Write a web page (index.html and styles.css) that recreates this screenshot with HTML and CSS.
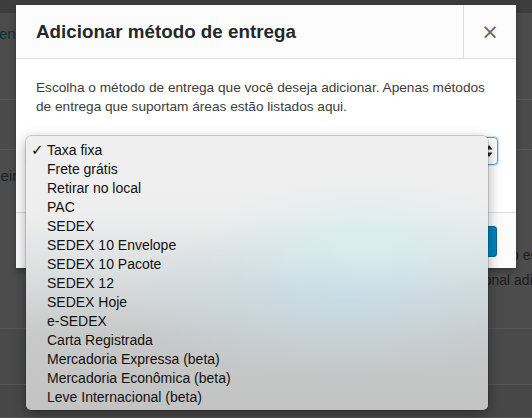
FILE: index.html
```html
<!doctype html>
<html>

<head>
    <title>Adicionar método de entrega</title>
    <link rel="stylesheet" href="styles.css">
</head>

<body>
    <div class="page">
        <div class="topbar"></div>
        <div class="row row-head">
            <span class="link-text">en</span>
        </div>
        <div class="row row-sub"></div>
        <div class="row row-zone">
            <div class="zone-name">Brasileiro</div>
            <div class="zone-desc first">o estado</div>
            <div class="zone-desc second">Internacional adicional</div>
        </div>
        <div class="row row-next"></div>
        <div class="row row-last"></div>
    </div>

    <div class="modal">
        <div class="modal-header">
            <h1>Adicionar método de entrega</h1>
            <button class="modal-close" type="button">&times;</button>
        </div>
        <div class="modal-body">
            <p>Escolha o método de entrega que você deseja adicionar. Apenas métodos de entrega que suportam áreas estão listados aqui.</p>
            <div class="select-box">
                <span class="select-value">Taxa fixa</span>
                <span class="select-arrows">
                    <svg width="8" height="14" viewBox="0 0 8 14">
                        <path d="M4 1 L7.5 5.5 H0.5 Z" fill="#222" />
                        <path d="M4 13 L7.5 8.5 H0.5 Z" fill="#222" />
                    </svg>
                </span>
            </div>
        </div>
        <div class="modal-footer">
            <button class="add-btn" type="button">Adicionar método de entrega</button>
        </div>
    </div>

    <ul class="select-menu">
        <li class="selected">Taxa fixa</li>
        <li>Frete grátis</li>
        <li>Retirar no local</li>
        <li>PAC</li>
        <li>SEDEX</li>
        <li>SEDEX 10 Envelope</li>
        <li>SEDEX 10 Pacote</li>
        <li>SEDEX 12</li>
        <li>SEDEX Hoje</li>
        <li>e-SEDEX</li>
        <li>Carta Registrada</li>
        <li>Mercadoria Expressa (beta)</li>
        <li>Mercadoria Econômica (beta)</li>
        <li>Leve Internacional (beta)</li>
    </ul>
</body>

</html>
```

FILE: styles.css
```css
body {
    margin: 0;
    width: 532px;
    height: 418px;
    overflow: hidden;
    position: relative;
    background-color: #4a4a4a;
    font-family: "Liberation Sans", Arial, sans-serif;
    font-size: 14px;
    color: #1c1c1c;
}

/* page behind the overlay */

.page {
    overflow: hidden;
}

.topbar {
    height: 13px;
    background-color: #3d3d3d;
}

.row {
    border-bottom: 1px solid #565656;
    box-sizing: border-box;
}

.row-head {
    height: 87px;
    padding-top: 12px;
    background-color: #4b4b4b;
}

.link-text {
    display: block;
    margin-left: -1px;
    color: #0d2f3c;
    font-size: 15px;
}

.row-sub {
    height: 50px;
}

.row-zone {
    height: 179px;
    padding-top: 17px;
    background-color: #4c4c4c;
}

.zone-name {
    margin-left: -37px;
    font-size: 15px;
    color: #16252b;
    white-space: nowrap;
}

.zone-desc {
    white-space: nowrap;
    line-height: 25px;
}

.zone-desc.first {
    margin-top: 59px;
    margin-left: 511px;
}

.zone-desc.second {
    margin-left: 430px;
}

.row-next {
    height: 56px;
}

.row-last {
    height: 33px;
    background-color: #474747;
}

/* modal */

.modal {
    position: absolute;
    left: 16px;
    top: 5px;
    width: 500px;
    background-color: #fff;
    box-shadow: 0 3px 6px rgba(0, 0, 0, 0.3);
}

.modal-header {
    display: flex;
    height: 53px;
    background-color: #fcfcfc;
    border-bottom: 1px solid #dddddd;
}

.modal-header h1 {
    flex: 1;
    margin: 0;
    padding-left: 20px;
    font-size: 18.8px;
    line-height: 54px;
    color: #23282d;
}

.modal-close {
    width: 53px;
    border: none;
    border-left: 1px solid #dddddd;
    background: none;
    font-family: "DejaVu Sans", sans-serif;
    font-size: 21px;
    color: #666;
    padding: 0;
}

.modal-body {
    padding: 19px 20px 47px 20px;
    border-bottom: 1px solid #dddddd;
}

.modal-body p {
    margin: 0 0 21px 0;
    font-size: 13.65px;
    line-height: 19px;
    color: #3c3c3c;
}

.select-box {
    display: flex;
    justify-content: space-between;
    align-items: center;
    height: 26px;
    margin-left: -9px;
    margin-right: -2px;
    padding: 0 4px 0 8px;
    border: 1px solid #5b9dd9;
    border-radius: 4px;
    box-shadow: 0 0 2px rgba(30, 140, 190, 0.8);
}

.select-arrows svg {
    display: block;
}

.modal-footer {
    display: flex;
    justify-content: flex-end;
    height: 55px;
    padding: 13px 19px 0 0;
    box-sizing: border-box;
    background-color: #fcfcfc;
}

.add-btn {
    height: 31px;
    padding: 0 14px;
    border: 1px solid #006799;
    border-radius: 3px;
    background-color: #0085ba;
    color: #fff;
    font-size: 13px;
}

/* open native select list */

.select-menu {
    position: absolute;
    left: 26px;
    top: 136px;
    width: 462px;
    margin: 0;
    padding: 5px 0 3px 0;
    list-style: none;
    border-radius: 5px;
    background:
        radial-gradient(ellipse 170px 60px at 340px 105px, rgba(216, 238, 240, 0.9), rgba(216, 238, 240, 0)),
        radial-gradient(ellipse 230px 80px at 320px 160px, rgba(198, 220, 230, 0.9), rgba(198, 220, 230, 0)),
        linear-gradient(#efefef 0%, #eeeeee 28%, #dcdfe0 50%, #c8c9c9 72%, #c3c3c3 100%);
    box-shadow: 0 4px 14px rgba(0, 0, 0, 0.35), 0 0 0 0.5px rgba(0, 0, 0, 0.25);
}

.select-menu li {
    position: relative;
    height: 19px;
    line-height: 19px;
    padding-left: 21px;
    font-size: 14px;
    color: #111;
}

.select-menu li.selected::before {
    content: "\2713";
    position: absolute;
    left: 5px;
    font-family: "DejaVu Sans", sans-serif;
    font-size: 15px;
}
```
